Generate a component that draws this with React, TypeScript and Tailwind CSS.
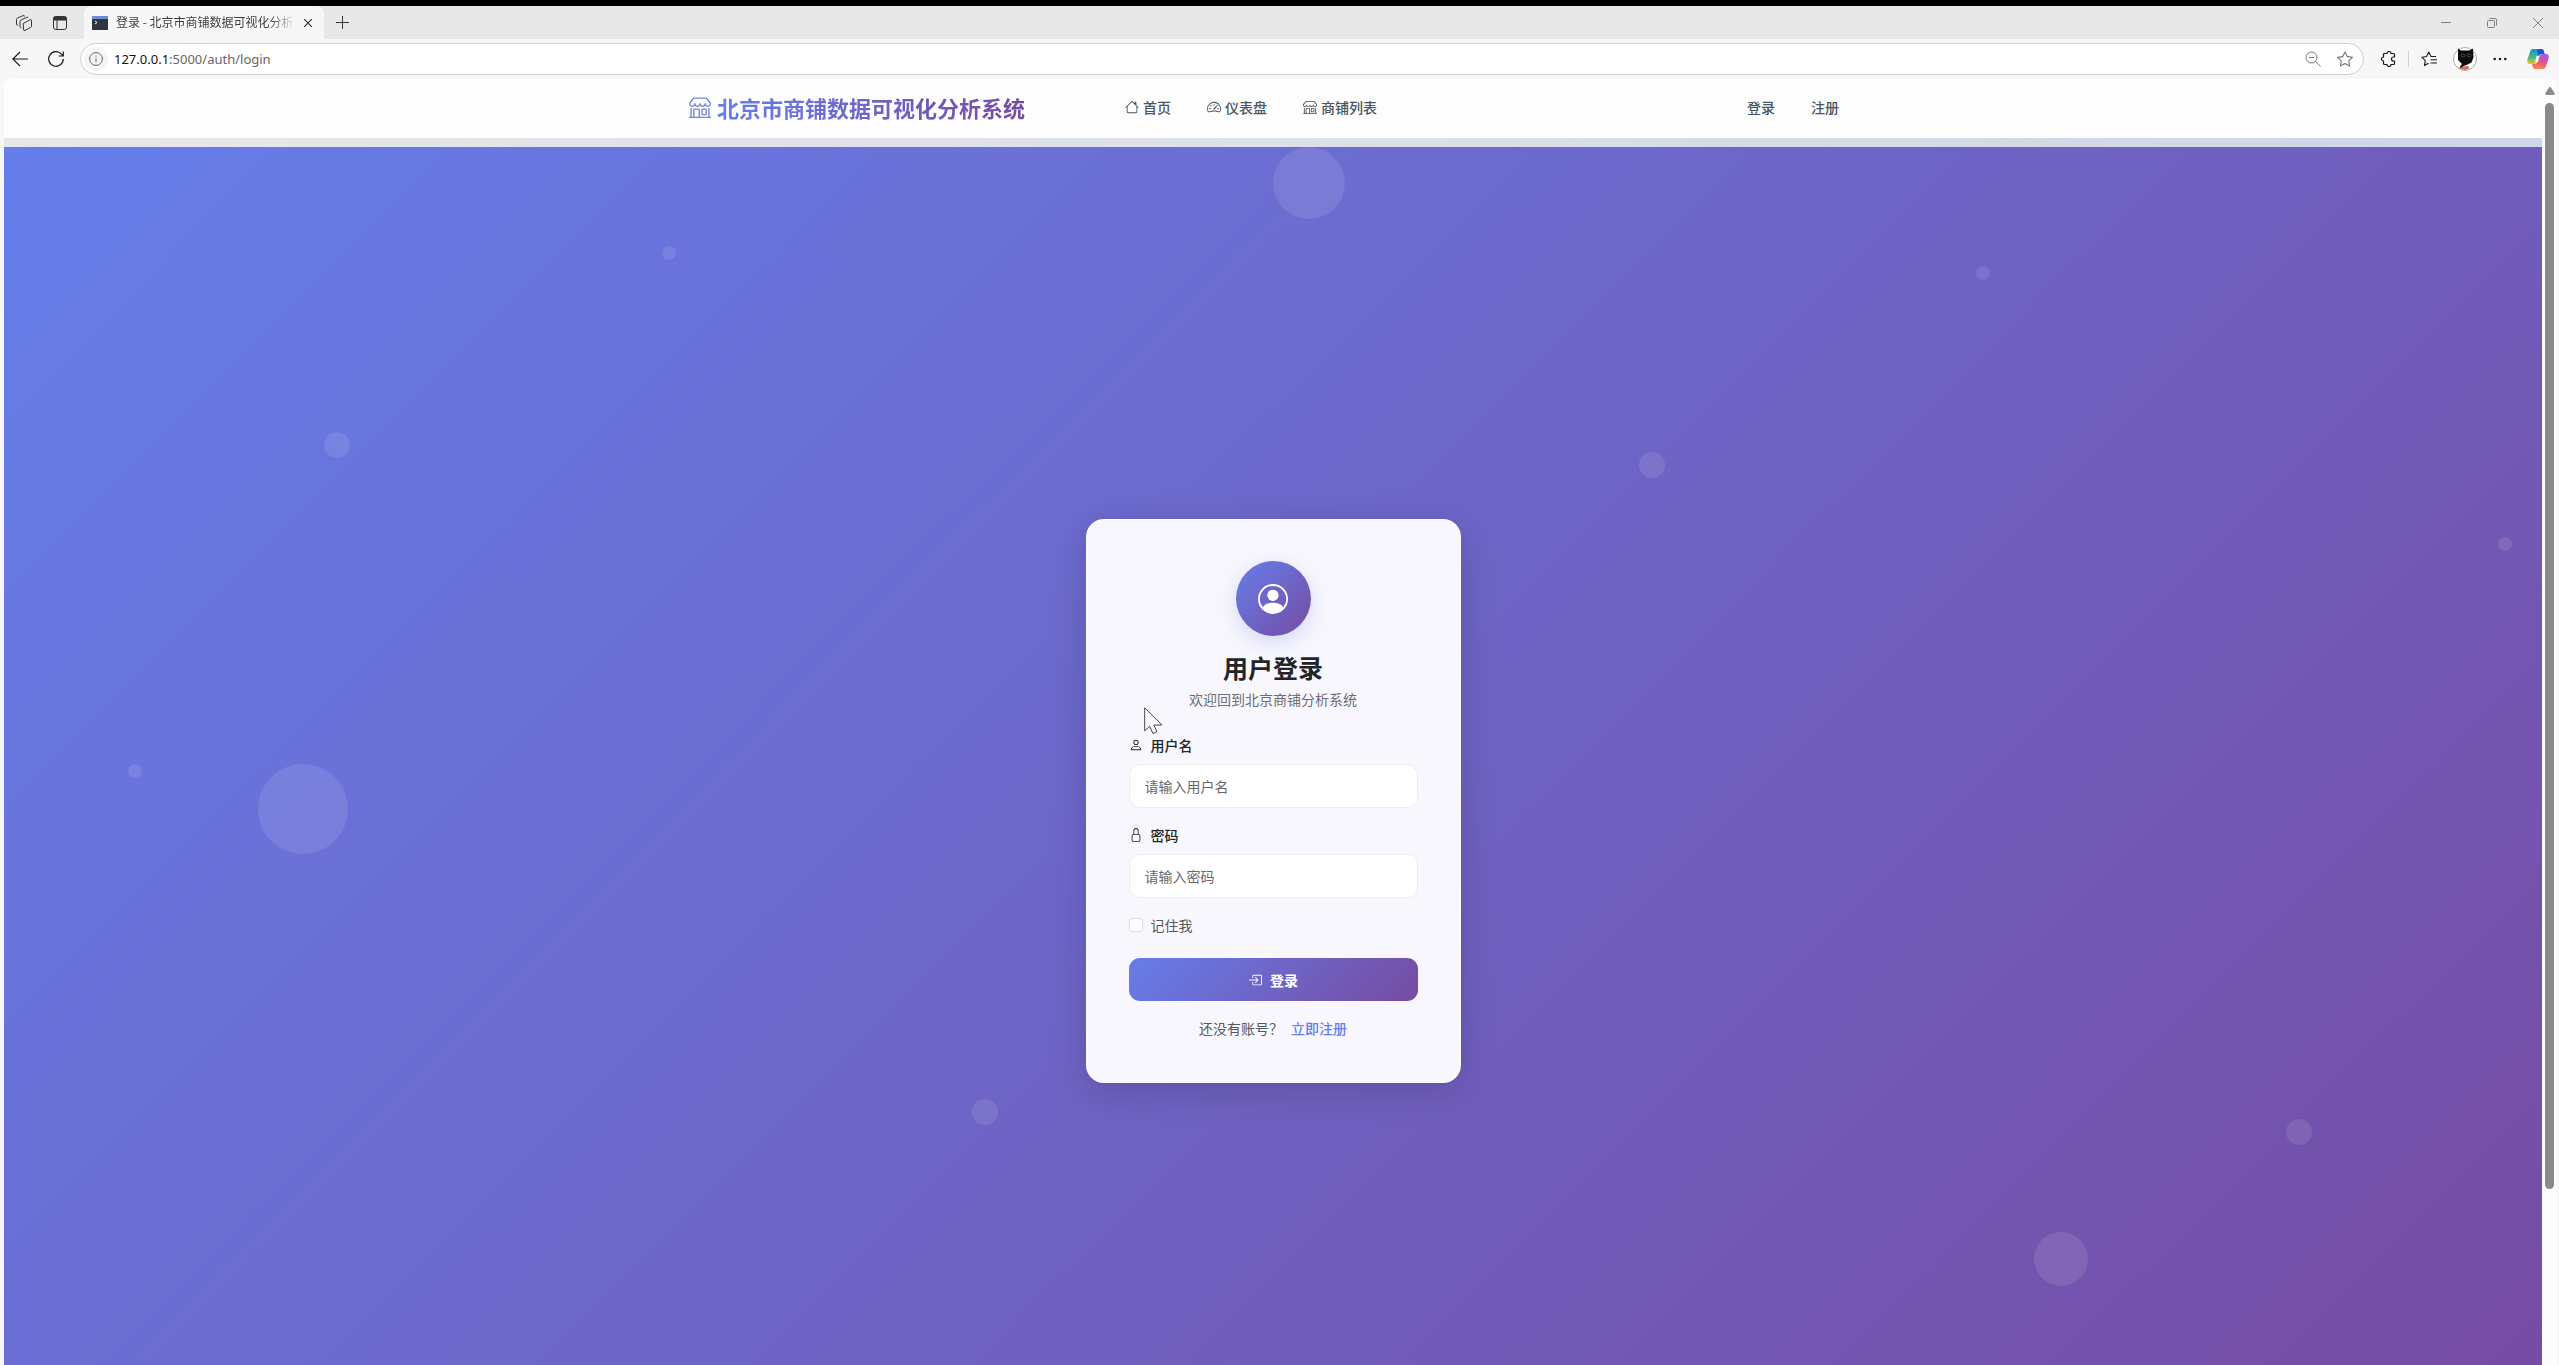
import { useState } from "react";
import {
  BsBoxArrowInRight,
  BsHouse,
  BsLock,
  BsPerson,
  BsPersonCircle,
  BsShop,
  BsSpeedometer2,
  BsStar,
} from "react-icons/bs";

const navItems = [
  { href: "#home", icon: BsHouse, label: "首页" },
  { href: "#dashboard", icon: BsSpeedometer2, label: "仪表盘" },
  { href: "#shops", icon: BsShop, label: "商铺列表" },
];

// cx, cy, r of the floating circles behind the card
const bubbles = [
  [1305, 36, 36],
  [665, 106, 7],
  [1979, 126, 7],
  [333, 298, 13],
  [1648, 318, 13],
  [2501, 397, 7],
  [131, 624, 7],
  [299, 662, 45],
  [981, 965, 13],
  [2295, 985, 13],
  [2057, 1112, 27],
];

function TabStrip() {
  return (
    <div className="flex h-[33px] shrink-0 items-center bg-[#e8e8e8] pr-4 pl-4 text-[#333]">
      <button aria-label="Workspaces">
        <svg viewBox="0 0 16 16" className="size-4" fill="none" stroke="currentColor" strokeLinejoin="round" strokeLinecap="round">
          <path d="M7.500 8.300 14 4.800q1.500-.600 1.500.800v5.600q0 .800-.800 1.200l-5.700 3q-1.500.700-1.500-.900Z" />
          <path d="M5 12.800q-1-.300-1-1.200V6.500q0-.900.800-1.300l6-2.900q1-.500 1.500.400" />
          <path d="M1.600 10.300q-1.100-.300-1.100-1.200V4.400q0-.900.800-1.300L7 .700q1.200-.400 1.700.400" />
        </svg>
      </button>
      <button aria-label="Tab actions" className="ml-5">
        <svg viewBox="0 0 16 16" className="size-4" fill="none" stroke="currentColor">
          <rect x="1.500" y="1.500" width="13" height="13" rx="2.500" />
          <path d="M2 2h12v3H2z" fill="currentColor" />
          <path d="M5 5v9" />
        </svg>
      </button>
      <div className="ml-4 flex h-full w-[240px] items-center rounded-t-lg bg-[#f7f7f7] pr-3 pl-2">
        <svg viewBox="0 0 16 14" className="h-[14px] w-4 shrink-0">
          <rect width="16" height="14" fill="#30363f" />
          <rect width="16" height="3" fill="#6b8fd0" />
          <path d="M3 5l2 1.500L3 8" fill="none" stroke="#fff" />
        </svg>
        <span className="mb-px ml-2 flex-1 overflow-hidden bg-gradient-to-r from-[#3a3a3a] from-85% to-transparent bg-clip-text text-[12px] leading-5 whitespace-nowrap text-transparent">
          登录 - 北京市商铺数据可视化分析系统
        </span>
        <button aria-label="Close tab" className="ml-2">
          <svg viewBox="0 0 8 8" className="size-2" stroke="#333" strokeWidth="1.200">
            <path d="M0 0 8 8M8 0 0 8" />
          </svg>
        </button>
      </div>
      <button aria-label="New tab" className="ml-3">
        <svg viewBox="0 0 13 13" className="size-[13px]" stroke="#333">
          <path d="M6.500 0v13M0 6.500h13" />
        </svg>
      </button>
      <div className="ml-auto flex items-center gap-9 text-[#808080]">
        <button aria-label="Minimize">
          <svg viewBox="0 0 10 10" className="size-[10px]" stroke="currentColor">
            <path d="M0 4.500h10" />
          </svg>
        </button>
        <button aria-label="Restore">
          <svg viewBox="0 0 10 10" className="size-[10px]" fill="none" stroke="currentColor">
            <rect x=".500" y="2.500" width="7" height="7" rx="1" />
            <path d="M2.500.500H8A1.500 1.500 0 0 1 9.500 2v5.500" />
          </svg>
        </button>
        <button aria-label="Close window">
          <svg viewBox="0 0 10 10" className="size-[10px]" stroke="currentColor">
            <path d="M0 0 10 10M10 0 0 10" />
          </svg>
        </button>
      </div>
    </div>
  );
}

function Toolbar() {
  const [url, setUrl] = useState("");

  return (
    <div className="flex h-10 shrink-0 items-center bg-[#f7f7f7] pr-[10px] pl-3 text-[#1a1a1a]">
      <button aria-label="Back">
        <svg viewBox="0 0 16 16" className="size-4" fill="none" stroke="currentColor" strokeWidth="1.100">
          <path d="M8 1 .800 8 8 15M1 8h15" />
        </svg>
      </button>
      <button aria-label="Reload" className="ml-5">
        <svg viewBox="0 0 16 16" className="size-4" fill="none" stroke="currentColor" strokeWidth="1.200">
          <path d="M15.300 8A7.300 7.300 0 1 1 13.500 3.200L15 4.800M15.300.500v4.500h-4.500" />
        </svg>
      </button>

      {/* address bar */}
      <div className="ml-4 flex h-8 flex-1 items-center rounded-full border border-[#cfcfcf] bg-white pr-[10px] pl-[3px]">
        <span className="flex size-6 items-center justify-center rounded-full bg-[#f5f5f5] text-[#666]">
          <svg viewBox="0 0 14 14" className="size-[14px]" fill="none" stroke="currentColor">
            <circle cx="7" cy="7" r="6.400" />
            <path d="M7 6v4.200M7 3.700v1.200" />
          </svg>
        </span>
        <label className="relative ml-[6px] flex-1 font-['Noto_Sans'] text-[13px] leading-5">
          {!url && (
            <span className="text-[#666]">
              <span className="text-[#111]">127.0.0.1</span>:5000/auth/login
            </span>
          )}
          <input
            aria-label="Address"
            value={url}
            onChange={(e) => setUrl(e.target.value)}
            className="absolute inset-0 w-full bg-transparent outline-none"
          />
        </label>
        <button aria-label="Zoom" className="text-[#777]">
          <svg viewBox="0 0 16 16" className="size-4" fill="none" stroke="currentColor">
            <circle cx="6.500" cy="6.500" r="5.500" />
            <path d="M3.800 6.500h5.400M10.500 10.500l5 5" />
          </svg>
        </button>
        <button aria-label="Favorite" className="ml-4 text-[#777]">
          <BsStar className="size-4" />
        </button>
      </div>

      <button aria-label="Extensions" className="ml-4">
        <svg viewBox="0 0 16 16" className="size-4" fill="none" stroke="currentColor" strokeWidth="1.200" strokeLinejoin="round">
          <path d="M4.500 2.500H7a2 2 0 0 1 4 0h2.500a1 1 0 0 1 1 1V6h-1a2 2 0 0 0 0 4h1v2.500a1 1 0 0 1-1 1H11a2 2 0 0 1-4 0H4.500a1 1 0 0 1-1-1V10a2 2 0 0 1 0-4V3.500a1 1 0 0 1 1-1Z" />
        </svg>
      </button>
      <span className="mx-3 h-4 w-px bg-[#d0d0d0]" />
      <button aria-label="Favorites">
        <svg viewBox="0 0 16 16" className="size-4" fill="none" stroke="currentColor" strokeWidth="1.100" strokeLinejoin="round">
          <path d="M15 5.500h-5L7.800 1 5.500 5.500.800 6.200l3.500 3.500L3.400 14.600l4.100-2.300M9.500 8.700H16M9.500 12H16" />
        </svg>
      </button>
      <button aria-label="Profile" className="ml-4">
        <svg viewBox="0 0 24 24" className="size-6">
          <circle cx="12" cy="12" r="11.500" fill="#fff" stroke="#aaa" />
          <path d="M5 1.500 8 3.500h8l4-2 .500 9-2 5-5 2.500-3 1L8 21.500l-1.500-1L9 17l-4-4Z" fill="#0c0c0c" />
          <path d="M6 21.500 10 19.500l5-.500 1.500 2.500-4.500 1.500Z" fill="#c9744e" />
          <path d="M8 8.500a2 1.500 0 1 0 4 0 2 1.500 0 1 0-4 0M14 8.500a2 1.500 0 1 0 4 0 2 1.500 0 1 0-4 0" fill="none" stroke="#666" strokeWidth=".600" />
        </svg>
      </button>
      <button aria-label="More" className="ml-4">
        <svg viewBox="0 0 14 14" className="size-[14px]" fill="currentColor">
          <circle cx="1.700" cy="7" r="1.300" />
          <circle cx="7" cy="7" r="1.300" />
          <circle cx="12.300" cy="7" r="1.300" />
        </svg>
      </button>
      <button aria-label="Copilot" className="ml-5">
        <svg viewBox="0 0 22 22" className="size-[22px]">
          <defs>
            <linearGradient id="cpLeft" x1="0" y1="0" x2="0" y2="1">
              <stop offset="0" stopColor="#1b8fe0" />
              <stop offset=".500" stopColor="#3cb58a" />
              <stop offset="1" stopColor="#e8c62c" />
            </linearGradient>
            <linearGradient id="cpRight" x1=".500" y1="0" x2=".300" y2="1">
              <stop offset="0" stopColor="#9a5cf0" />
              <stop offset=".500" stopColor="#e8508c" />
              <stop offset="1" stopColor="#fb8a3c" />
            </linearGradient>
          </defs>
          <path d="M6 1h8.500c1.500 0 2 1 2.500 3l.500 2h-3c-2 0-2.500 1-3 3l-1.500 4c-.600 2-1.500 3-3.500 3H3c-3 0-3-2.500-2.500-5L3 4c.500-2 1.500-3 3-3Z" fill="url(#cpLeft)" />
          <path d="M11 1h3.500c1.500 0 2 1 2.500 3l.500 2h-3c-1.500 0-2.200.500-2.700 2L10.500 5C10 3 10 2 11 1Z" fill="#1d55c8" />
          <path d="M16 21H8c-1.500 0-2-1-2.500-3L5 16h2.500c2 0 2.500-1 3-3L12 9c.600-2 1.500-3 3.500-3H19c3 0 3 2.500 2.500 5L19 18c-.500 2-1.500 3-3 3Z" fill="url(#cpRight)" />
          <path d="m9.500 8h3L11 14H8Z" fill="#f7f7f7" />
        </svg>
      </button>
    </div>
  );
}

function Navbar() {
  return (
    <nav className="h-[59px] shrink-0 bg-[#fdfdfd]">
      <div className="mx-auto flex h-full max-w-[1188px] items-center px-[10px] pb-1">
        <a href="#home" className="mr-[82px] flex items-center gap-[6px] text-[22px] leading-8 font-bold">
          <BsShop className="size-[22px] text-[#7385dc]" />
          <span className="bg-linear-to-r/srgb from-[#667eea] to-[#764ba2] bg-clip-text text-transparent">
            北京市商铺数据可视化分析系统
          </span>
        </a>
        {navItems.map((item) => {
          const Icon = item.icon;
          return (
            <a
              key={item.href}
              href={item.href}
              className="flex items-center gap-1 px-[18px] text-[14px] leading-6 font-medium text-[#495562]"
            >
              <Icon className="size-[14px]" />
              <span>{item.label}</span>
            </a>
          );
        })}
        <a href="#login" className="ml-auto px-[18px] text-[14px] leading-6 font-medium text-[#495562]">
          登录
        </a>
        <a href="#register" className="px-[18px] text-[14px] leading-6 font-medium text-[#495562]">
          注册
        </a>
      </div>
    </nav>
  );
}

function LoginCard() {
  const [remember, setRemember] = useState(false);

  return (
    <form
      onSubmit={(e) => e.preventDefault()}
      className="relative w-[375px] rounded-[18px] border border-white/60 bg-[#f8f7fd] px-[42px] pt-[41px] pb-[43px] text-[14px] leading-[22px] shadow-[0_8px_36px_rgba(0,0,0,0.16)]"
    >
      <div className="mx-auto flex size-[75px] items-center justify-center rounded-full bg-linear-135/srgb from-[#667eea] to-[#764ba2] shadow-[0_6px_20px_rgba(102,126,234,0.25)]">
        <BsPersonCircle className="size-[30px] text-white" />
      </div>
      <h1 className="mt-4 text-center text-[25px] leading-[30px] font-bold text-[#212529]">用户登录</h1>
      <p className="mt-[6px] text-center text-[#6c6e73]">欢迎回到北京商铺分析系统</p>

      <label htmlFor="username" className="mt-6 flex items-center gap-2 font-medium text-[#212529]">
        <BsPerson className="size-[14px]" />
        用户名
      </label>
      <input
        id="username"
        type="text"
        placeholder="请输入用户名"
        className="mt-2 block h-[44px] w-full rounded-[11px] border border-[#ececf1] bg-white px-[15px] outline-none placeholder:text-[#66686c]"
      />

      <label htmlFor="password" className="mt-4 flex items-center gap-2 font-medium text-[#212529]">
        <BsLock className="size-[14px]" />
        密码
      </label>
      <input
        id="password"
        type="password"
        placeholder="请输入密码"
        className="mt-2 block h-[44px] w-full rounded-[11px] border border-[#ececf1] bg-white px-[15px] outline-none placeholder:text-[#66686c]"
      />

      <label className="mt-4 flex items-center gap-2 text-[#55585c]">
        <input
          type="checkbox"
          checked={remember}
          onChange={(e) => setRemember(e.target.checked)}
          className="size-[14px] appearance-none rounded-[4px] border border-[#dedee4] bg-white checked:bg-[#667eea]"
        />
        记住我
      </label>

      <button
        type="submit"
        className="mt-[22px] flex h-[43px] w-full items-center justify-center gap-2 rounded-[11px] bg-linear-135/srgb from-[#667eea] to-[#764ba2] font-bold text-white"
      >
        <BsBoxArrowInRight className="size-[14px]" />
        登录
      </button>

      <p className="mt-4 flex justify-center gap-2 text-[#55585c]">
        <span>还没有账号？</span>
        <a href="#register" className="font-medium text-[#667eea]">
          立即注册
        </a>
      </p>

      {/* mouse pointer */}
      <svg viewBox="0 0 19 28" className="pointer-events-none absolute top-[187px] left-[57px] h-7 w-[19px]">
        <path
          d="M.700.800v23l5-4.500 3.200 7.200 4-1.800-3-6.700h8Z"
          fill="#fff"
          stroke="#444"
          strokeLinejoin="round"
        />
      </svg>
    </form>
  );
}

export default function App() {
  return (
    <div className="flex h-screen flex-col overflow-hidden border-t-[6px] border-black bg-[#f7f7f7] font-['Noto_Sans_CJK_SC',sans-serif]">
      <TabStrip />
      <Toolbar />
      <div className="mr-[2px] ml-1 flex min-h-0 flex-1 overflow-hidden rounded-t-lg bg-[#fcfcfc]">
        <div className="flex min-w-0 flex-1 flex-col overflow-hidden">
          <Navbar />
          <div className="h-[9px] shrink-0 bg-gradient-to-r from-[#e6e7e8] via-[#dce0e8] to-[#cdd6e6]" />
          <main className="relative flex h-[calc(100vh-57px)] shrink-0 items-center justify-center bg-linear-135/srgb from-[#667eea] to-[#764ba2]">
            <svg
              viewBox="0 0 2538 1308"
              preserveAspectRatio="xMidYMid slice"
              className="absolute inset-0 size-full"
              fill="#fff"
              fillOpacity=".1"
            >
              {bubbles.map(([cx, cy, r]) => (
                <circle key={`${cx}-${cy}`} cx={cx} cy={cy} r={r} />
              ))}
            </svg>
            <LoginCard />
          </main>
        </div>

        {/* scrollbar */}
        <div className="flex w-[15px] shrink-0 flex-col items-center pt-2">
          <svg viewBox="0 0 10 8" className="h-2 w-[10px]">
            <path d="M5 0c.600 0 1 .400 1.300 1L9.500 6c.500 1 0 2-1 2h-7c-1 0-1.500-1-1-2L3.700 1C4 .400 4.400 0 5 0Z" fill="#8a8a8a" />
          </svg>
          <div className="mt-2 h-[85%] w-[9px] rounded-full bg-[#8a8a8a]" />
        </div>
      </div>
    </div>
  );
}
